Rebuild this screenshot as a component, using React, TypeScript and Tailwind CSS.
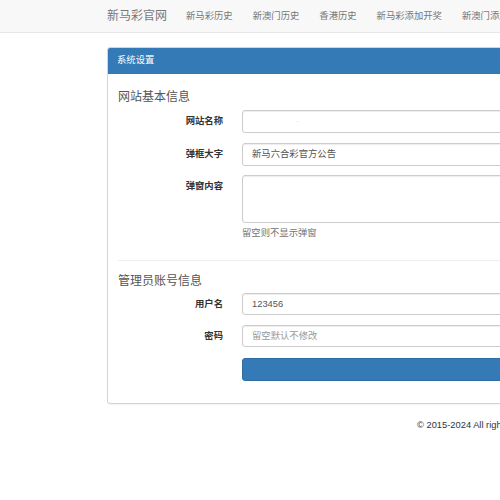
import React from "react";

const font = { fontFamily: '"Liberation Sans", "Noto Sans CJK SC", sans-serif' };

function Label({ children, top = false }: { children: React.ReactNode; top?: boolean }) {
  return (
    <div
      className={`w-[105px] shrink-0 text-right text-[9.33px] font-bold text-[#333] leading-[13px] ${
        top ? "pt-[5px]" : "self-center"
      }`}
    >
      {children}
    </div>
  );
}

export default function App() {
  const navLinks = ["新马彩历史", "新澳门历史", "香港历史", "新马彩添加开奖", "新澳门添加开奖", "香港添加开奖"];
  return (
    <div className="w-[500px] h-[500px] overflow-hidden bg-white" style={font}>
      {/* Navbar */}
      <div className="h-[33px] bg-[#f8f8f8] border-b border-[#e7e7e7] flex items-center pl-[107px] whitespace-nowrap">
        <span className="text-[12px] text-[#777] leading-[13px] mr-[9px]">新马彩官网</span>
        {navLinks.map((l) => (
          <span key={l} className="text-[9.33px] text-[#777] leading-[13px] px-[10px]">
            {l}
          </span>
        ))}
      </div>

      {/* Panel */}
      <div className="pl-[107px] pt-[14px]">
        <div className="w-[600px] border border-[#d4d4d4] rounded-[3px] shadow-[0_1px_1px_rgba(0,0,0,0.05)] bg-white">
          <div className="h-[26px] bg-[#337ab7] border-b border-[#337ab7] rounded-t-[2px] flex items-center pl-[9px]">
            <span className="text-[9.33px] text-white leading-[13px]">系统设置</span>
          </div>
          <div className="pt-[10px] px-[10px] pb-[22px]">
            <h4 className="mt-[7px] mb-[6px] text-[12px] leading-[13px] text-[#555] font-normal">网站基本信息</h4>

            <div className="flex gap-[19px] mb-[10px]">
              <Label>网站名称</Label>
              <div className="flex-1 h-[23px] border border-[#ccc] rounded-[3px] shadow-[inset_0_1px_1px_rgba(0,0,0,0.075)] flex items-center pl-[9px]">
                <span className="text-[9.33px] text-[#ddd] leading-[13px] ml-[44px]">·</span>
              </div>
            </div>

            <div className="flex gap-[19px] mb-[9px]">
              <Label>弹框大字</Label>
              <div className="flex-1 h-[23px] border border-[#ccc] rounded-[3px] shadow-[inset_0_1px_1px_rgba(0,0,0,0.075)] flex items-center pl-[9px]">
                <span className="text-[9.33px] text-[#555] leading-[13px]">新马六合彩官方公告</span>
              </div>
            </div>

            <div className="flex gap-[19px]">
              <Label top>弹窗内容</Label>
              <div className="flex-1">
                <div className="h-[48px] border border-[#ccc] rounded-[3px] shadow-[inset_0_1px_1px_rgba(0,0,0,0.075)]" />
                <div className="mt-[4px] text-[9.33px] leading-[13px] text-[#737373]">留空则不显示弹窗</div>
              </div>
            </div>

            <div className="mt-[20px] border-t border-[#eee]" />

            <h4 className="mt-[14px] mb-[5px] text-[12px] leading-[13px] text-[#555] font-normal">管理员账号信息</h4>

            <div className="flex gap-[19px] mb-[10px]">
              <Label>用户名</Label>
              <div className="flex-1 h-[22px] border border-[#ccc] rounded-[3px] shadow-[inset_0_1px_1px_rgba(0,0,0,0.075)] flex items-center pl-[9px]">
                <span className="text-[9.33px] text-[#555] leading-[13px]">123456</span>
              </div>
            </div>

            <div className="flex gap-[19px] mb-[11px]">
              <Label>密码</Label>
              <div className="flex-1 h-[22px] border border-[#ccc] rounded-[3px] shadow-[inset_0_1px_1px_rgba(0,0,0,0.075)] flex items-center pl-[9px]">
                <span className="text-[9.33px] text-[#999] leading-[13px]">留空默认不修改</span>
              </div>
            </div>

            <div className="flex gap-[19px]">
              <div className="w-[105px] shrink-0" />
              <div className="flex-1 h-[23px] bg-[#337ab7] border border-[#2e6da4] rounded-[3px]" />
            </div>
          </div>
        </div>
      </div>

      {/* Footer */}
      <div className="mt-[15px] pl-[417px] whitespace-nowrap text-[9.33px] leading-[13px] text-[#333]">
        © 2015-2024 All rights reserved.
      </div>
    </div>
  );
}
